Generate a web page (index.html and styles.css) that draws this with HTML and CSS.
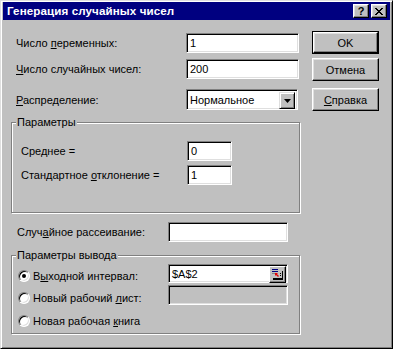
FILE: index.html
```html
<!DOCTYPE html>
<html lang="ru">
<head>
<meta charset="utf-8">
<title>Генерация случайных чисел</title>
<link rel="stylesheet" href="styles.css">
</head>
<body>
<div class="window">
  <div class="titlebar">
    <span class="title">Генерация случайных чисел</span>
    <div class="tbtns">
      <div class="tbtn help">?</div>
      <div class="tbtn close">
        <svg width="8" height="7" viewBox="0 0 8 7"><path d="M0 0h2v1h1v1h2v-1h1v-1h2v1h-1v1h-1v1h-1v1h1v1h1v1h1v1h-2v-1h-1v-1h-2v1h-1v1h-2v-1h1v-1h1v-1h1v-1h-1v-1h-1v-1h-1z" fill="#000"/></svg>
      </div>
    </div>
  </div>
  <div class="content">
    <div class="left">
      <div class="row r1"><span class="lbl">Число <u>п</u>еременных:</span><div class="field wide">1</div></div>
      <div class="row r2"><span class="lbl"><u>Ч</u>исло случайных чисел:</span><div class="field wide">200</div></div>
      <div class="row r3"><span class="lbl"><u>Р</u>аспределение:</span>
        <div class="field select"><span class="sel-text">Нормальное</span>
          <div class="drop"><svg width="7" height="4" viewBox="0 0 7 4"><path d="M0 0h7l-3.5 4z" fill="#000"/></svg></div>
        </div>
      </div>
      <div class="group g1">
        <span class="legend">Параметры</span>
        <div class="grow"><span class="glbl">Сре<u>д</u>нее =</span><div class="field small">0</div></div>
        <div class="grow"><span class="glbl">Стандартное <u>о</u>тклонение =</span><div class="field small">1</div></div>
      </div>
      <div class="row r4"><span class="lbl lbl2">Случ<u>а</u>йное рассеивание:</span><div class="field mid"></div></div>
      <div class="group g2">
        <span class="legend">Параметры вывода</span>
        <div class="orow o1">
          <div class="opt"><span class="radio on"></span><span>В<u>ы</u>ходной интервал:</span></div>
          <div class="field mid ref"><span>$A$2</span>
            <div class="refbtn"><svg width="11" height="11" viewBox="0 0 11 11">
              <rect x="0" y="0" width="6" height="1" fill="#000080"/>
              <rect x="0" y="2" width="6" height="1" fill="#000080"/>
              <rect x="0" y="4" width="3" height="1" fill="#808080"/>
              <rect x="8" y="4" width="1" height="1" fill="#000"/>
              <rect x="8" y="6" width="1" height="1" fill="#000"/>
              <rect x="1" y="9" width="10" height="2" fill="#000"/>
              <rect x="10" y="2" width="1" height="8" fill="#000"/>
              <path d="M3 4h3l-1 1 2 2-1 1-2-2-1 1z" fill="#e00000"/>
            </svg></div>
          </div>
        </div>
        <div class="orow o2">
          <div class="opt"><span class="radio"></span><span>Новый рабочий <u>л</u>ист:</span></div>
          <div class="field mid disabled"></div>
        </div>
        <div class="orow o3">
          <div class="opt"><span class="radio"></span><span>Новая рабочая <u>к</u>нига</span></div>
        </div>
      </div>
    </div>
    <div class="right">
      <div class="defframe"><div class="btn">OK</div></div>
      <div class="btn b2">Отмена</div>
      <div class="btn b3"><span><u>С</u>правка</span></div>
    </div>
  </div>
</div>
</body>
</html>
```
FILE: styles.css
```css
* { box-sizing: border-box; }
html, body { margin: 0; padding: 0; background: #c0c0c0; }
body {
  font-family: "Liberation Sans", Arial, sans-serif;
  font-size: 11px;
  line-height: 12px;
  color: #000;
}
u { text-decoration: underline; text-underline-offset: 1px; }

.window {
  width: 393px;
  height: 349px;
  background: #c0c0c0;
  border: 1px solid;
  border-color: #dfdfdf #000 #000 #dfdfdf;
  box-shadow: inset 1px 1px 0 #fff, inset -1px -1px 0 #808080;
  padding: 1px 2px;
}

.titlebar {
  height: 18px;
  background: #000080;
  color: #fff;
  display: flex;
  align-items: center;
  justify-content: space-between;
  padding: 0 3px 0 4px;
}
.title { font-weight: bold; font-size: 11.6px; letter-spacing: 0.1px; }
.tbtns { display: flex; gap: 2px; }
.tbtn {
  width: 16px;
  height: 14px;
  background: #c0c0c0;
  border: 1px solid;
  border-color: #fff #000 #000 #fff;
  box-shadow: inset -1px -1px 0 #808080, inset 1px 1px 0 #dfdfdf;
  display: flex;
  align-items: center;
  justify-content: center;
  color: #000;
  font-weight: bold;
  font-size: 11px;
}
.tbtn.help { padding-bottom: 1px; }

.content { display: flex; padding-left: 8px; }
.left { width: 289px; display: flex; flex-direction: column; }
.right { width: 67px; margin-left: 12px; display: flex; flex-direction: column; }

.row { display: flex; align-items: center; height: 20px; padding-left: 5px; }
.r1 { margin-top: 13px; }
.r2 { margin-top: 6px; }
.r3 { margin-top: 10px; height: 21px; }
.r4 { margin-top: 9px; padding-left: 6px; }
.lbl { width: 170px; }
.lbl2 { width: 151px; }

.field {
  background: #fff;
  border: 1px solid;
  border-color: #808080 #fff #fff #808080;
  box-shadow: inset 1px 1px 0 #000, inset -1px -1px 0 #dfdfdf;
  height: 20px;
  padding: 3px 3px 0 3px;
}
.wide { width: 113px; }
.mid { width: 120px; }
.small { width: 45px; }
.select { width: 112px; height: 21px; display: flex; padding: 2px 2px 2px 3px; }
.sel-text { flex: 1; padding-top: 2px; }
.drop {
  width: 16px;
  height: 17px;
  background: #c0c0c0;
  border: 1px solid;
  border-color: #dfdfdf #000 #000 #dfdfdf;
  box-shadow: inset 1px 1px 0 #fff, inset -1px -1px 0 #808080;
  display: flex;
  align-items: center;
  justify-content: center;
}

.group {
  position: relative;
  border: 1px solid #808080;
  box-shadow: inset 1px 1px 0 #fff, 1px 1px 0 #fff;
}
.legend {
  position: absolute;
  top: -7px;
  left: 4px;
  padding: 0 1px;
  background: #c0c0c0;
}
.g1 { margin-top: 12px; height: 91px; padding: 18px 0 0 9px; display: flex; flex-direction: column; gap: 4px; }
.grow { display: flex; align-items: center; height: 20px; }
.glbl { width: 166px; }

.g2 { margin-top: 13px; height: 79px; padding: 8px 0 0 6px; display: flex; flex-direction: column; }
.orow { display: flex; align-items: flex-start; height: 21px; }
.opt { display: flex; align-items: center; gap: 3px; width: 150px; margin-top: 6px; }
.o2 .opt { margin-top: 7px; }
.o3 .opt { margin-top: 9px; }
.radio {
  width: 12px;
  height: 12px;
  border-radius: 50%;
  background: #fff;
  border: 1px solid;
  border-color: #808080 #fff #fff #808080;
  box-shadow: inset 1px 1px 0 #000, inset -1px -1px 0 #dfdfdf;
  display: flex;
  align-items: center;
  justify-content: center;
}
.radio.on::after {
  content: "";
  width: 4px;
  height: 4px;
  border-radius: 50%;
  background: #000;
}
.ref { display: flex; padding: 1px 1px 1px 3px; height: 19px; }
.ref span { flex: 1; padding-top: 2px; }
.refbtn {
  width: 17px;
  height: 17px;
  background: #c0c0c0;
  border: 1px solid;
  border-color: #fff #000 #000 #fff;
  box-shadow: inset -1px -1px 0 #808080;
  display: flex;
  align-items: center;
  justify-content: center;
}
.disabled { background: #c0c0c0; }

.btn {
  height: 23px;
  background: #c0c0c0;
  border: 1px solid;
  border-color: #fff #000 #000 #fff;
  box-shadow: inset -1px -1px 0 #808080, inset 1px 1px 0 #dfdfdf;
  display: flex;
  align-items: center;
  justify-content: center;
}
.defframe { margin-top: 11px; border: 1px solid #000; height: 23px; }
.defframe .btn { height: 21px; }
.b2 { margin-top: 4px; }
.b3 { margin-top: 7px; }
```
